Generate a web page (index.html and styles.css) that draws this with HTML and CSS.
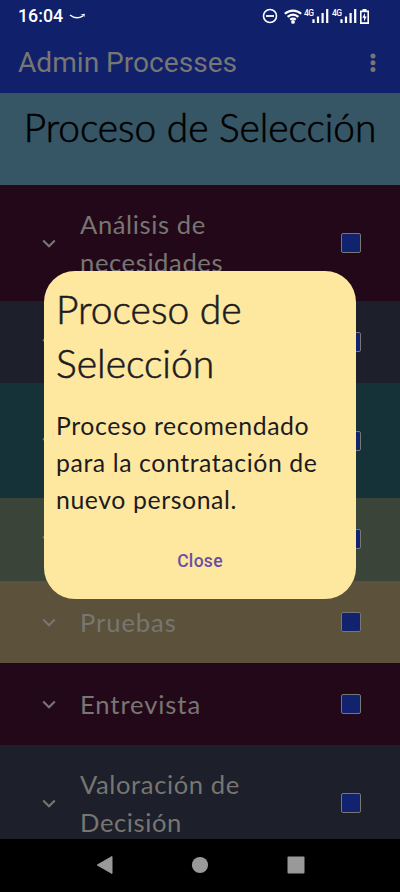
FILE: index.html
```html
<!DOCTYPE html>
<html lang="es">
<head>
<meta charset="utf-8">
<meta name="viewport" content="width=device-width">
<title>Admin Processes</title>
<link rel="stylesheet" href="styles.css">
</head>
<body>
<svg width="0" height="0" class="defs">
  <symbol id="chevron" viewBox="0 0 14 9"><path d="M1.2 1.4 7 7.2l5.8-5.8" fill="none" stroke="currentColor" stroke-width="2.1"/></symbol>
</svg>
<div class="screen">
  <header class="top">
    <div class="status">
      <span class="clock">16:04</span>
      <svg class="smile" width="17" height="7" viewBox="0 0 17 7"><path d="M1 2C5 5.3 10 5.4 14 2.8" fill="none" stroke="#fff" stroke-width="1.5"/><path d="M11.5 1.4 16 .8l-.8 3.4-1-1.6z" fill="#fff"/></svg>
      <div class="indicators">
        <svg width="16" height="16" viewBox="0 0 16 16"><path d="M4 8h8" stroke="#fff" stroke-width="1.8"/><circle cx="8" cy="8" r="6.5" fill="none" stroke="#fff" stroke-width="1.6"/></svg>
        <svg class="wifi" width="18" height="15" viewBox="0 0 18 15"><path d="M.8 4.8c4.8-4.3 11.6-4.3 16.4 0M3.6 7.9c3.3-2.8 7.5-2.8 10.8 0M6.2 10.6c1.8-1.4 3.8-1.4 5.6 0" fill="none" stroke="#fff" stroke-width="2.2"/><circle cx="9" cy="12.9" r="1.9" fill="#fff"/></svg>
        <span class="signal"><b>4G</b><svg width="17" height="14" viewBox="0 0 17 14"><path d="M1.5 14V10.2M6 14V7.4M10.6 14V4M15.2 14V0" stroke="#fff" stroke-width="2.2"/></svg></span>
        <span class="signal"><b>4G</b><svg width="17" height="14" viewBox="0 0 17 14"><path d="M1.5 14V10.2M6 14V7.4M10.6 14V4M15.2 14V0" stroke="#fff" stroke-width="2.2"/></svg></span>
        <svg class="battery" width="9" height="15" viewBox="0 0 9 15"><path d="M2.5 0h4v1.5H9V15H0V1.5h2.5z" fill="#fff"/><path d="M1.6 3.2h5.8v10H1.6z" fill="#10206b"/><path d="M5 4 2.3 8.8H4v3.8l2.8-5H5z" fill="#fff"/></svg>
      </div>
    </div>
    <div class="appbar">
      <h1>Admin Processes</h1>
      <svg width="6" height="20" viewBox="0 0 6 20" fill="#777672"><circle cx="3" cy="3" r="2.5"/><circle cx="3" cy="9.7" r="2.5"/><circle cx="3" cy="16.4" r="2.5"/></svg>
    </div>
  </header>
  <h2 class="process">Proceso de Selección</h2>
  <main class="steps">
    <section class="step tall plum"><svg class="chevron"><use href="#chevron"/></svg><span class="label wide">Análisis de necesidades</span><i class="check"></i></section>
    <section class="step slate"><svg class="chevron"><use href="#chevron"/></svg><span class="label"></span><i class="check"></i></section>
    <section class="step tall teal"><svg class="chevron"><use href="#chevron"/></svg><span class="label"></span><i class="check"></i></section>
    <section class="step green"><svg class="chevron"><use href="#chevron"/></svg><span class="label"></span><i class="check"></i></section>
    <section class="step sand"><svg class="chevron"><use href="#chevron"/></svg><span class="label">Pruebas</span><i class="check"></i></section>
    <section class="step plum"><svg class="chevron"><use href="#chevron"/></svg><span class="label">Entrevista</span><i class="check"></i></section>
    <section class="step tall slate"><svg class="chevron"><use href="#chevron"/></svg><span class="label wide">Valoración de Decisión</span><i class="check"></i></section>
  </main>
  <nav class="navbar">
    <svg width="18" height="20" viewBox="0 0 18 20"><path d="M16 1.5v17L1.2 10z" fill="#999" stroke="#999" stroke-linejoin="round"/></svg>
    <svg width="18" height="18" viewBox="0 0 18 18"><circle cx="9" cy="9" r="8.1" fill="#999"/></svg>
    <svg width="18" height="18" viewBox="0 0 18 18"><rect x=".5" y=".5" width="17" height="17" rx="1" fill="#999"/></svg>
  </nav>
  <div class="dialog" role="dialog">
    <h2>Proceso de<br>Selección</h2>
    <p>Proceso recomendado<br>para la contratación de<br>nuevo personal.</p>
    <button>Close</button>
  </div>
</div>
</body>
</html>
```

FILE: styles.css
```css
* { box-sizing: border-box; }
body { margin: 0; background: #000; }
h1, h2, p { margin: 0; font-weight: 400; }
svg { flex: none; display: block; }
.defs { position: absolute; }
.screen { position: relative; display: flex; flex-direction: column; width: 400px; height: 892px; overflow: hidden; font-family: Lato, sans-serif; }
.top { height: 93px; flex: none; background: #10206b; font-family: Roboto, sans-serif; }
.status { display: flex; align-items: center; height: 32px; padding: 0 31px 0 18px; color: #fff; }
.clock { font-size: 17.8px; font-weight: 500; line-height: 32px; }
.smile { margin-left: 6px; }
.indicators { display: flex; align-items: center; margin-left: auto; }
.wifi { margin-left: 6px; }
.signal { display: flex; margin-left: 2px; }
.signal b { width: 8px; font-size: 8.5px; line-height: 8px; font-weight: 500; letter-spacing: -.5px; }
.signal + .signal { margin-left: 3px; }
.battery { margin-left: 3px; }
.appbar { display: flex; align-items: center; justify-content: space-between; height: 61px; padding: 0 24px 0 18px; }
.appbar h1 { font-size: 28.1px; line-height: 62px; color: #777672; }
.process { flex: none; height: 92px; padding-top: 7px; background: #365565; color: #000; font-size: 38.8px; line-height: 55px; font-weight: 300; text-align: center; white-space: nowrap; -webkit-text-stroke: .6px #000; }
.steps { height: 653.5px; flex: none; overflow: hidden; }
.step { display: flex; align-items: center; height: 82.2px; padding: 0 39px 0 42px; color: #777672; }
.tall { height: 115.6px; }
.plum { background: #230819; }
.slate { background: #1d1f2a; }
.teal { background: #153238; }
.green { background: #3b4439; }
.sand { background: #5c513a; }
.chevron { width: 14px; height: 9px; margin-top: 1px; }
.label { width: 190px; margin-left: 24px; padding-top: 1px; font-size: 25.6px; line-height: 38.6px; letter-spacing: .9px; }
.wide { letter-spacing: .6px; }
.check { width: 20px; height: 20px; margin-left: auto; background: #11226e; border: 1px solid #777672; border-radius: 2px; }
.navbar { flex: 1; display: flex; align-items: center; justify-content: center; gap: 77.5px; background: #000; }
.dialog { position: absolute; left: 44px; top: 271px; width: 312px; height: 328px; padding: 11px 12px; display: flex; flex-direction: column; background: #fee79f; border-radius: 31px; color: #1c1b1f; }
.dialog h2 { font-size: 39px; line-height: 54px; font-weight: 300; -webkit-text-stroke: .6px #1c1b1f; }
.dialog p { margin-top: 18px; font-size: 24.8px; line-height: 36.8px; letter-spacing: .6px; white-space: nowrap; }
.dialog button { align-self: center; margin-top: 30px; padding: 0; border: 0; background: none; color: #6750a4; font: 500 17.5px/26px Roboto, sans-serif; letter-spacing: .3px; }
```
